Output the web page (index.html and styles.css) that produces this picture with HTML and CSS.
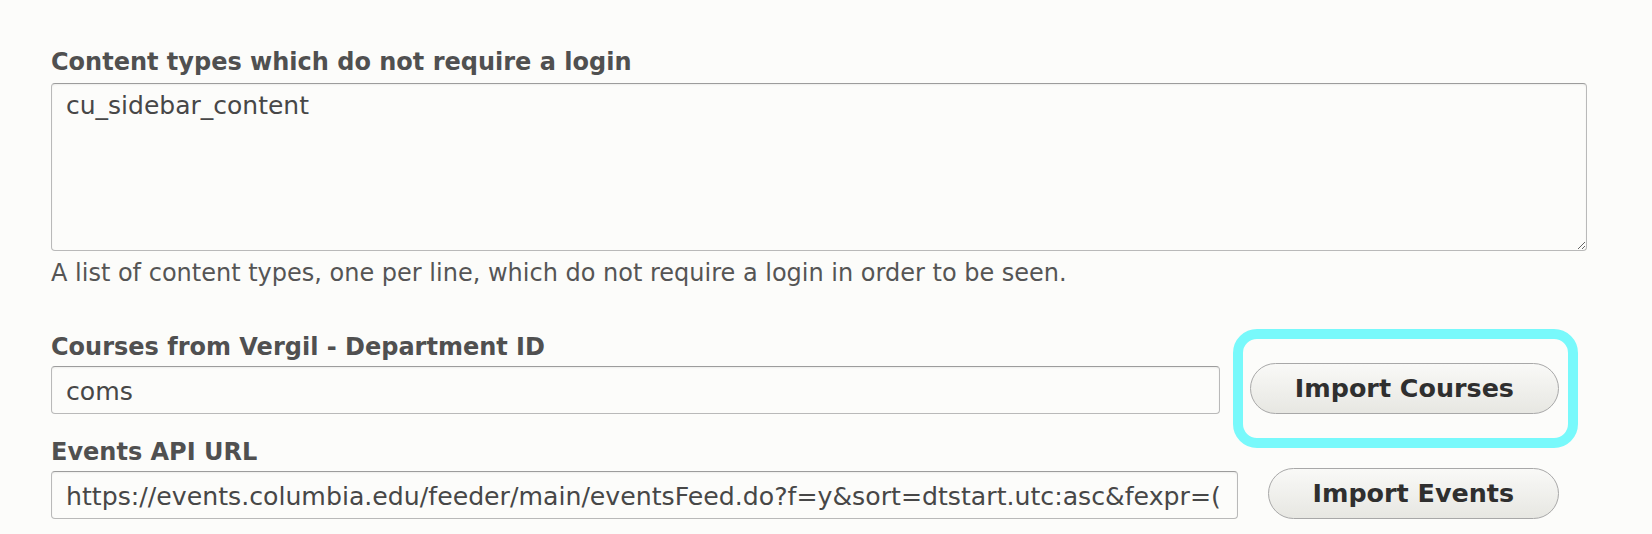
FILE: index.html
```html
<!DOCTYPE html>
<html lang="en">
<head>
<meta charset="utf-8">
<title>Settings</title>
<link rel="stylesheet" href="styles.css">
</head>
<body>
<form class="form">
  <div class="item">
    <label class="label label-top" for="types">Content types which do not require a login</label>
    <textarea id="types" class="textarea">cu_sidebar_content</textarea>
    <div class="help">A list of content types, one per line, which do not require a login in order to be seen.</div>
  </div>

  <div class="row row-courses">
    <div class="col">
      <label class="label" for="dept">Courses from Vergil - Department ID</label>
      <input id="dept" class="input" type="text" value="coms">
    </div>
    <button type="button" class="button button-highlight">Import Courses</button>
  </div>

  <div class="row row-events">
    <div class="col">
      <label class="label" for="events">Events API URL</label>
      <input id="events" class="input" type="text" value="https://events.columbia.edu/feeder/main/eventsFeed.do?f=y&amp;sort=dtstart.utc:asc&amp;fexpr=(">
    </div>
    <button type="button" class="button">Import Events</button>
  </div>
</form>
</body>
</html>
```
FILE: styles.css
```css
html, body {
  margin: 0;
  padding: 0;
  background: #fcfcfa;
}

body {
  font-family: "DejaVu Sans", Verdana, sans-serif;
  color: #555;
}

.form {
  width: 1536px;
  margin: 0 0 0 51px;
  padding-top: 48px;
}

.label {
  display: block;
  font-size: 24px;
  font-weight: bold;
  line-height: 28px;
  color: #505050;
  margin-bottom: 5px;
}

.label-top {
  margin-bottom: 7px;
}

.textarea {
  display: block;
  box-sizing: border-box;
  width: 1536px;
  height: 168px;
  margin: 0;
  padding: 7px 14px;
  font-family: "DejaVu Sans", Verdana, sans-serif;
  font-size: 25px;
  color: #474747;
  background: #fcfcfa;
  border: 1px solid #b9b9b9;
  border-top-color: #9c9c9c;
  border-radius: 4px;
  box-shadow: inset 0 1px 2px rgba(0, 0, 0, 0.06);
  outline: none;
}

.help {
  margin-top: 8px;
  font-size: 24px;
  line-height: 28px;
  color: #555;
}

.row {
  display: flex;
  align-items: flex-end;
  gap: 29.5px;
  padding-right: 28px;
}

.row-courses {
  margin-top: 46px;
}

.row-events {
  margin-top: 24px;
}

.col {
  flex: 1;
  min-width: 0;
}

.input {
  display: block;
  box-sizing: border-box;
  width: 100%;
  height: 48px;
  margin: 0;
  padding: 2px 8px 0 14px;
  font-family: "DejaVu Sans", Verdana, sans-serif;
  font-size: 25.2px;
  line-height: 44px;
  color: #474747;
  background: #fcfcfa;
  border: 1px solid #b9b9b9;
  border-top-color: #9c9c9c;
  border-radius: 4px;
  box-shadow: inset 0 1px 2px rgba(0, 0, 0, 0.06);
  outline: none;
}

.button {
  position: relative;
  flex: none;
  box-sizing: border-box;
  height: 51px;
  margin: 0;
  padding: 0 44px;
  font-family: "DejaVu Sans", Verdana, sans-serif;
  font-size: 25.4px;
  font-weight: bold;
  line-height: 49px;
  color: #2f2f2f;
  background: linear-gradient(#f9f9f7, #e7e7e2);
  border: 1px solid #a8a8a8;
  border-radius: 26px;
  cursor: pointer;
}

.button-highlight::after {
  content: "";
  position: absolute;
  top: -35px;
  bottom: -35px;
  left: -18px;
  right: -20px;
  border: 10px solid #78f9fb;
  border-radius: 24px;
  pointer-events: none;
}
```
